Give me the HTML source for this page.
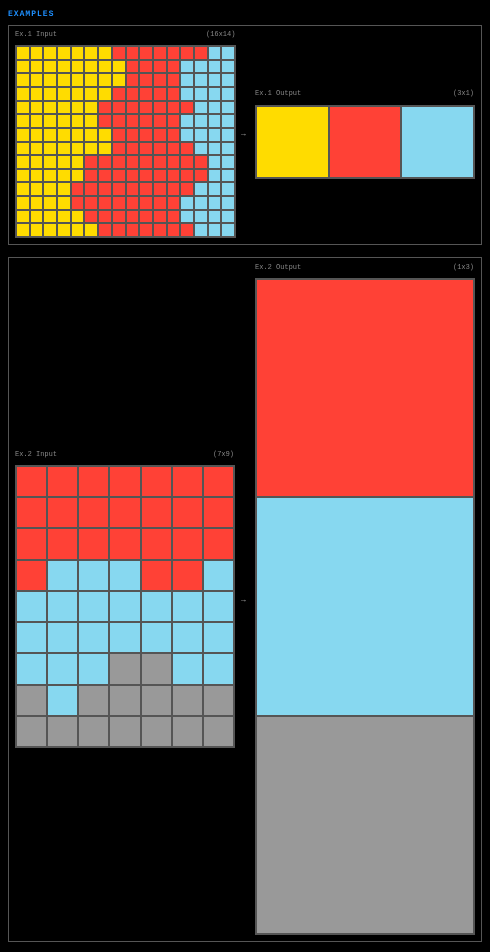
<!DOCTYPE html>
<html><head><style>
body{margin:0;background:#000;width:490px;height:952px;position:relative;overflow:hidden;font-family:"Liberation Mono",monospace;}
.t{position:absolute;left:8px;top:10px;color:#1e90ff;font-size:8px;font-weight:bold;letter-spacing:1px;}
.p{position:absolute;border:1px solid #555;box-sizing:border-box;}
.lb{position:absolute;font-size:7px;color:#888;}
.g{position:absolute;display:grid;gap:2px;background:#555;padding:2px;box-sizing:border-box;}
.arr{position:absolute;color:#aaa;font-size:8px;}
.Y{background:#FFDC00}.R{background:#FF4136}.B{background:#87D8F0}.G{background:#999}
</style></head><body>
<div class="t">EXAMPLES</div>
<div class="p" style="left:8px;top:25px;width:474px;height:220px"></div>
<div class="p" style="left:8px;top:257px;width:474px;height:685px"></div>
<div class="lb" style="left:15px;top:31px">Ex.1 Input</div>
<div class="lb" style="left:206px;top:31px">(16x14)</div>
<div class="g" id="g1" style="left:15px;top:45px;width:221px;height:193px;grid-template-columns:repeat(16,1fr);grid-template-rows:repeat(14,1fr)"></div>
<div class="arr" style="left:241px;top:130px">→</div>
<div class="lb" style="left:255px;top:90px">Ex.1 Output</div>
<div class="lb" style="left:453px;top:90px">(3x1)</div>
<div class="g" id="o1" style="left:255px;top:105px;width:220px;height:74px;grid-template-columns:repeat(3,1fr)"></div>
<div class="lb" style="left:255px;top:264px">Ex.2 Output</div>
<div class="lb" style="left:453px;top:264px">(1x3)</div>
<div class="g" id="o2" style="left:255px;top:278px;width:220px;height:657px;grid-template-rows:repeat(3,1fr)"></div>
<div class="lb" style="left:15px;top:451px">Ex.2 Input</div>
<div class="lb" style="left:213px;top:451px">(7x9)</div>
<div class="g" id="g2" style="left:15px;top:465px;width:220px;height:283px;grid-template-columns:repeat(7,1fr);grid-template-rows:repeat(9,1fr)"></div>
<div class="arr" style="left:241px;top:596px">→</div>
<script>
function fill(id,rows){var e=document.getElementById(id),h='';rows.forEach(function(r){for(var c of r)h+='<div class="'+c+'"></div>';});e.innerHTML=h;}
function run(s){var o='';s.forEach(function(p){o+=p[0].repeat(p[1]);});return o;}
var r1=[[7,7,2],[8,4,4],[8,4,4],[7,5,4],[6,7,3],[6,6,4],[7,5,4],[7,6,3],[5,9,2],[5,9,2],[4,9,3],[4,8,4],[5,7,4],[6,7,3]].map(function(a){return run([['Y',a[0]],['R',a[1]],['B',a[2]]]);});
fill('g1',r1);
fill('o1',['YRB']);
fill('o2',['R','B','G']);
fill('g2',['RRRRRRR','RRRRRRR','RRRRRRR','RBBBRRB','BBBBBBB','BBBBBBB','BBBGGBB','GBGGGGG','GGGGGGG']);
</script>
</body></html>
